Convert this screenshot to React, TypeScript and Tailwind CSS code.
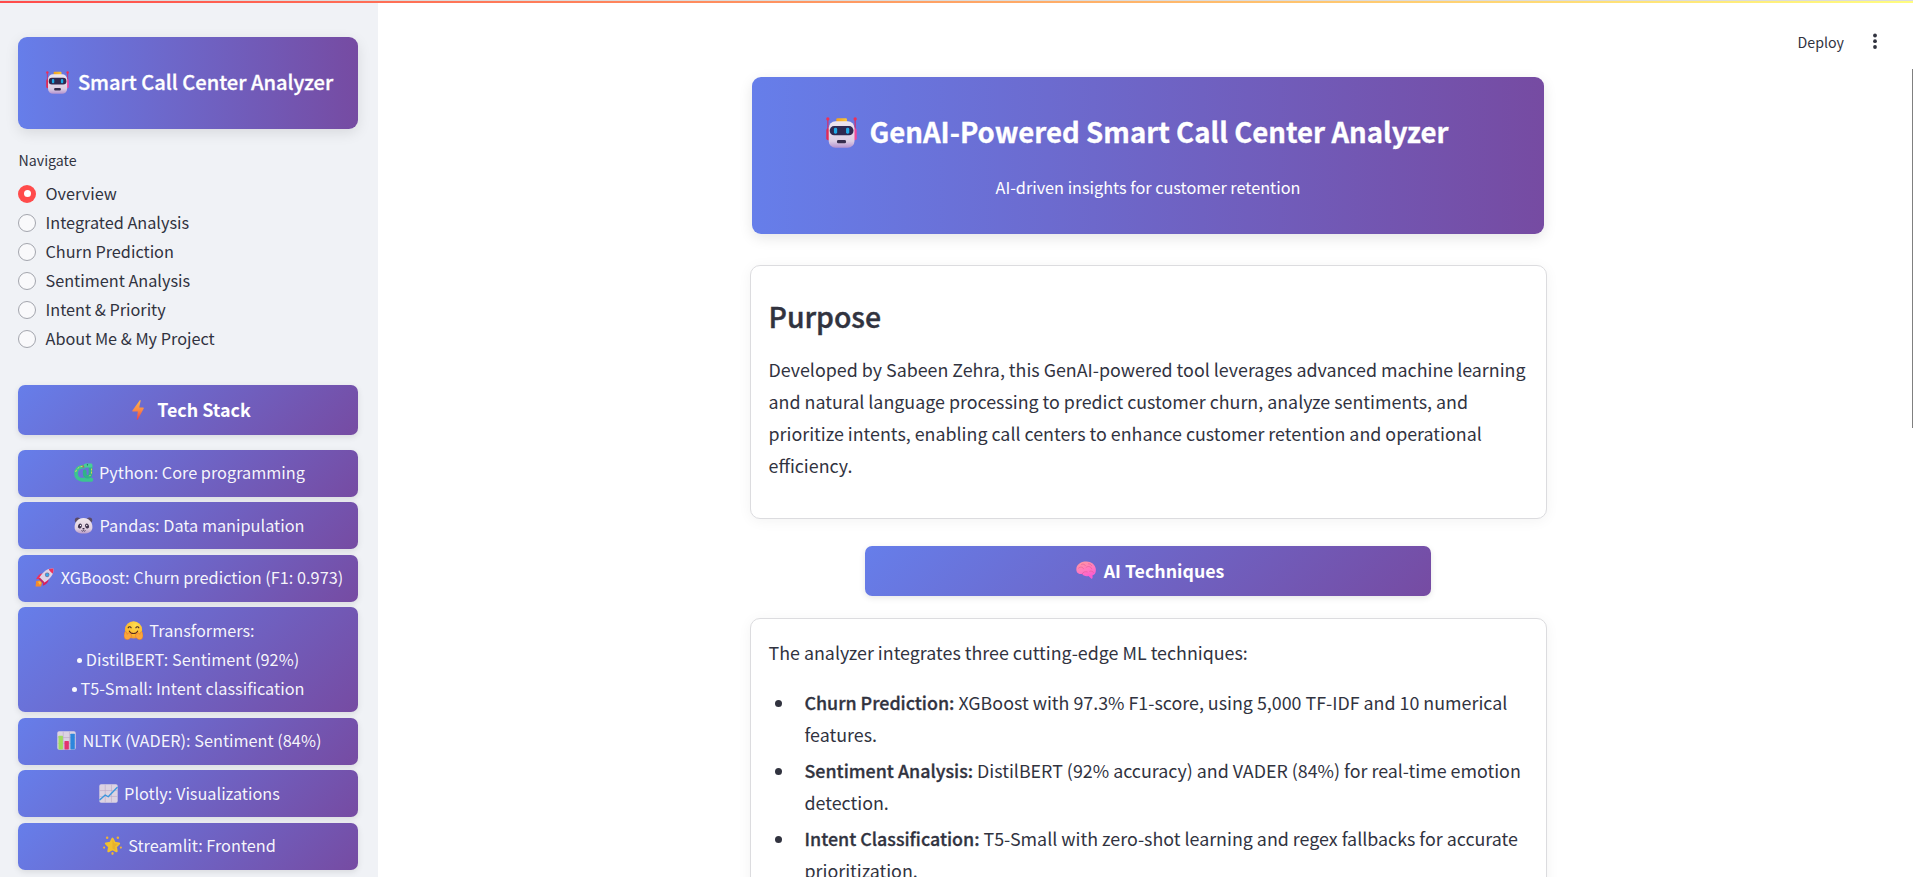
import React from "react";

const FONT = "font-['Noto_Sans_CJK_SC','Source_Sans_Pro',sans-serif]";

type IconProps = { className?: string };

function Robot({ className = "" }: IconProps) {
  return (
    <svg viewBox="0 0 32 32" className={className}>
      <defs>
        <linearGradient id="robotHead" x1="0" y1="0" x2="0" y2="1">
          <stop offset="0" stopColor="#eee6f0" />
          <stop offset="0.75" stopColor="#dccde4" />
          <stop offset="1" stopColor="#b391cf" />
        </linearGradient>
        <linearGradient id="robotTop" x1="0" y1="0" x2="1" y2="0">
          <stop offset="0" stopColor="#f0a024" />
          <stop offset="1" stopColor="#fbc83a" />
        </linearGradient>
      </defs>
      <path d="M1.9 2v14M30.1 2v14" stroke="#d42a6c" strokeWidth="1.2" />
      <circle cx="1.9" cy="2" r="1.7" fill="#ef2f56" />
      <circle cx="30.1" cy="2" r="1.7" fill="#ef2f56" />
      <rect x="0.3" y="11.5" width="5" height="12.5" rx="2" fill="#e02a55" />
      <rect x="26.7" y="11.5" width="5" height="12.5" rx="2" fill="#f0469a" />
      <rect x="10.6" y="1.2" width="11" height="6" rx="1.2" fill="url(#robotTop)" />
      <rect x="2.8" y="4.4" width="26.6" height="27.4" rx="7" fill="url(#robotHead)" />
      <rect x="3.8" y="9.4" width="24.6" height="9.4" rx="4.5" fill="#2f2850" />
      <rect x="8.2" y="11.2" width="3.3" height="6" rx="1.4" fill="#1fa9e6" />
      <rect x="20.7" y="11.2" width="3.3" height="6" rx="1.4" fill="#1fa9e6" />
      <rect x="11.3" y="23.7" width="9.4" height="3.5" rx="1.5" fill="#352d4d" />
    </svg>
  );
}

function Bolt({ className = "" }: IconProps) {
  return (
    <svg viewBox="0 0 32 32" className={className}>
      <defs>
        <linearGradient id="bolt" x1="0" y1="0" x2="0" y2="1">
          <stop offset="0" stopColor="#fdb54a" />
          <stop offset="0.5" stopColor="#fb8b45" />
          <stop offset="1" stopColor="#ee3f4c" />
        </linearGradient>
      </defs>
      <path
        d="M18.600 0.600c.9-.9 1.900-.3 1.600.9L17.900 12h6.200c1.100 0 1.500 1 .9 1.900L15.600 31c-.7 1-1.700.6-1.500-.6L15.700 18.500H8c-1.100 0-1.600-.8-.9-1.800z"
        fill="url(#bolt)"
      />
    </svg>
  );
}

function Snake({ className = "" }: IconProps) {
  return (
    <svg viewBox="0 0 32 32" className={className}>
      <path d="M17 6C8 6 3.400 11 3.400 17.500c0 7 5 10.700 11 10.700h15" fill="none" stroke="#3cc491" strokeWidth="6.400" strokeLinecap="round" />
      <path d="M27.800 5v12.500c0 7.500-9.800 7.500-9.800.5v-4" fill="none" stroke="#30b288" strokeWidth="6.200" strokeLinecap="round" />
      <path d="M16.500 4c0-2.300 2-3.200 5-3.200h7c2 0 2.500 1 2.500 3v3.700H21c-3 0-4.500-1-4.500-3.500z" fill="#47cf98" />
      <path d="M17 6l-3-1.800M17 6l-2.500 1.500" stroke="#e6315c" strokeWidth="1.400" />
      <path d="M3 14.500l1-2.400M6.500 9l2-1.600M11.500 6.200l2.200-.5M29.600 10v2M29.400 15v2.200M27.400 20.500l-1 1.200" stroke="#e6d94e" strokeWidth="1.600" strokeLinecap="round" />
      <circle cx="22.600" cy="3" r="1.100" fill="#1f4a47" />
    </svg>
  );
}

function Panda({ className = "" }: IconProps) {
  return (
    <svg viewBox="0 0 32 32" className={className}>
      <defs>
        <linearGradient id="panda" x1="0" y1="0" x2="0" y2="1">
          <stop offset="0" stopColor="#efe6ec" />
          <stop offset="0.7" stopColor="#e0cfe0" />
          <stop offset="1" stopColor="#b99bc9" />
        </linearGradient>
      </defs>
      <circle cx="6" cy="7" r="4.6" fill="#5a4a66" />
      <circle cx="26" cy="7" r="4.6" fill="#5a4a66" />
      <path d="M16 3.500c9 0 15 7 15 15 0 8-6 11-15 11S1 26.500 1 18.500c0-8 6-15 15-15z" fill="url(#panda)" />
      <ellipse cx="10" cy="17" rx="3.2" ry="4.2" transform="rotate(25 10 17)" fill="#3f324d" />
      <ellipse cx="22" cy="17" rx="3.2" ry="4.2" transform="rotate(-25 22 17)" fill="#3f324d" />
      <circle cx="11" cy="16" r="1.1" fill="#fff" />
      <circle cx="21.5" cy="16" r="1.1" fill="#fff" />
      <ellipse cx="16" cy="21.5" rx="2" ry="1.4" fill="#2f2440" />
      <path d="M12.500 24.500c1.500 1.500 2.800 1.300 3.500 0 .7 1.300 2 1.500 3.500 0" fill="none" stroke="#2f2440" strokeWidth="1.3" />
    </svg>
  );
}

function Rocket({ className = "" }: IconProps) {
  return (
    <svg viewBox="0 0 32 32" className={className}>
      <path d="M2 22l6-1 4 4-2 6H1z" fill="#f58a2c" />
      <path d="M5 23l4-.5 1.500 3L8 28z" fill="#fbbf3c" />
      <path d="M14 9C8 9 4 14 2 19l8-1z" fill="#ef2f5c" />
      <path d="M23 18c0 6-4.500 10-10 12l1-8z" fill="#d91f5f" />
      <path d="M31 1c1 9-4 17-16 24l-8-8C14 5 22 0 31 1z" fill="#dfd3e6" />
      <path d="M31 1c.3 3 0 5.500-1 8.500C27.500 8 24.500 5 23 2.300 25.500 1.200 28 .7 31 1z" fill="#f0305a" />
      <circle cx="20.5" cy="11.5" r="3.9" fill="#7f7396" />
      <circle cx="20.5" cy="11.5" r="2.7" fill="#35a9ee" />
      <path d="M8 16l8 8-2.500 1.800L6 18.500z" fill="#c42a62" />
    </svg>
  );
}

function Hug({ className = "" }: IconProps) {
  return (
    <svg viewBox="0 0 32 32" className={className}>
      <defs>
        <radialGradient id="hug" cx="0.6" cy="0.25" r="0.8">
          <stop offset="0" stopColor="#ffe04f" />
          <stop offset="0.7" stopColor="#fbb62d" />
          <stop offset="1" stopColor="#ee8b3a" />
        </radialGradient>
      </defs>
      <circle cx="16" cy="15" r="14.5" fill="url(#hug)" />
      <path d="M7 11.500c1-2.500 4-2.500 5 0M20 11.500c1-2.500 4-2.500 5 0" fill="none" stroke="#4a2b2b" strokeWidth="1.9" strokeLinecap="round" />
      <path d="M9 17c2 5.500 12 5.500 14 0" fill="none" stroke="#5a2a20" strokeWidth="1.9" strokeLinecap="round" />
      <path d="M1 19c1.500-1.500 3-.5 3.500 1l1 2.500 2-2.500c1.500-1.500 3 0 2.500 1.500 2 0 3 1.500 2.500 3.500C12 29 9 31.500 5.500 31.500 1 31.500 0 27 0 24z" fill="#fba63a" stroke="#e2782b" strokeWidth=".8" />
      <path d="M31 19c-1.500-1.500-3-.5-3.500 1l-1 2.500-2-2.500c-1.500-1.500-3 0-2.500 1.500-2 0-3 1.500-2.500 3.500.5 4 3.500 6.500 7 6.500 4.500 0 5.500-4.500 5.500-7.500z" fill="#fba63a" stroke="#e2782b" strokeWidth=".8" />
    </svg>
  );
}

function ChartPaper() {
  return (
    <>
      <rect x="0.5" y="0.5" width="31" height="31" rx="3" fill="#dcd3e2" />
      <path d="M10.500 1v30M21 1v30M1 11h30M1 21h30" stroke="#bba9c7" strokeWidth="1" />
    </>
  );
}

function Bars({ className = "" }: IconProps) {
  return (
    <svg viewBox="0 0 32 32" className={className}>
      <ChartPaper />
      <rect x="2.5" y="8" width="7.5" height="23" rx="1" fill="#9fdb60" />
      <rect x="12.5" y="17" width="7.5" height="14" rx="1" fill="#e2336f" />
      <rect x="22.5" y="4.5" width="7.5" height="26.5" rx="1" fill="#2d86dc" />
    </svg>
  );
}

function Line({ className = "" }: IconProps) {
  return (
    <svg viewBox="0 0 32 32" className={className}>
      <ChartPaper />
      <path d="M1.500 26.500l9-8 5 3L30.500 6" fill="none" stroke="#3a97de" strokeWidth="2.3" strokeLinecap="round" strokeLinejoin="round" />
    </svg>
  );
}

function GlowStar({ className = "" }: IconProps) {
  return (
    <svg viewBox="0 0 32 32" className={className}>
      <path
        d="M16 4.500l3.500 7 7.600 1.100-5.500 5.400 1.300 7.600L16 22 9.100 25.600l1.300-7.600-5.500-5.400 7.600-1.100z"
        fill="#f0c02e"
        stroke="#f0c02e"
        strokeWidth="3.6"
        strokeLinejoin="round"
      />
      <path d="M16 6l2.600 6 6.400 1-4.600 4.600 1 6.400-5.400-3z" fill="#dba22c" opacity=".5" />
      <g fill="#f0b335">
        <circle cx="7" cy="3" r="2.1" />
        <circle cx="25" cy="3" r="2.1" />
        <circle cx="1.9" cy="19.5" r="1.8" />
        <circle cx="30.1" cy="19.5" r="1.8" />
        <ellipse cx="16" cy="29.4" rx="1.9" ry="2.4" />
      </g>
    </svg>
  );
}

function Brain({ className = "" }: IconProps) {
  return (
    <svg viewBox="0 0 32 32" className={className}>
      <defs>
        <linearGradient id="brain" x1="0" y1="0" x2="0.4" y2="1">
          <stop offset="0" stopColor="#ff9c9c" />
          <stop offset="0.6" stopColor="#ff78c0" />
          <stop offset="1" stopColor="#fa5bd0" />
        </linearGradient>
      </defs>
      <path
        d="M14 2.500c8-1.500 17 3.500 17.700 12 .6 6-1.700 9.500-5.200 10v3.500c0 2-1.500 2.500-2.700 1L20 25.500c-4 1-8.500 0-10-3-5 .5-9.500-2-9.500-7.500C.5 8 7 3 14 2.500z"
        fill="url(#brain)"
      />
      <path
        d="M9 7c3-1.500 5 0 6 2M4 13c3-3 7-2 8 1M16 12c3-3 8-2 9 2M20 6c2 0 4 1 5 3M10 22c1-3 5-4 8-3M22 18c2-1 5 0 6 2"
        fill="none"
        stroke="#dc4d90"
        strokeWidth="1"
        strokeLinecap="round"
        opacity=".75"
      />
    </svg>
  );
}

const navItems = [
  "Overview",
  "Integrated Analysis",
  "Churn Prediction",
  "Sentiment Analysis",
  "Intent & Priority",
  "About Me & My Project",
];

type StackItem = {
  icon: (p: IconProps) => React.ReactElement;
  title: string;
  points?: string[];
  box: string;
};

const stack: StackItem[] = [
  { icon: Snake, title: "Python: Core programming", box: "h-[47px] mt-[15px] pb-[3px]" },
  { icon: Panda, title: "Pandas: Data manipulation", box: "h-[47px] mt-[5px] pb-px" },
  { icon: Rocket, title: "XGBoost: Churn prediction (F1: 0.973)", box: "h-[47px] mt-[6px] pb-[3px]" },
  {
    icon: Hug,
    title: "Transformers:",
    points: ["DistilBERT: Sentiment (92%)", "T5-Small: Intent classification"],
    box: "h-[105px] mt-[5px] pb-px",
  },
  { icon: Bars, title: "NLTK (VADER): Sentiment (84%)", box: "h-[47px] mt-[6px] pb-[3px]" },
  { icon: Line, title: "Plotly: Visualizations", box: "h-[47px] mt-[5px] pb-px" },
  { icon: GlowStar, title: "Streamlit: Frontend", box: "h-[47px] mt-[6px] pb-[3px]" },
];

const techniques = [
  { name: "Churn Prediction:", first: "XGBoost with 97.3% F1-score, using 5,000 TF-IDF and 10 numerical", rest: "features." },
  { name: "Sentiment Analysis:", first: "DistilBERT (92% accuracy) and VADER (84%) for real-time emotion", rest: "detection." },
  { name: "Intent Classification:", first: "T5-Small with zero-shot learning and regex fallbacks for accurate", rest: "prioritization." },
];

function Sidebar() {
  return (
    <aside className="flex h-full w-[378px] shrink-0 flex-col bg-[#f0f2f6] pt-[37px] pr-[20px] pl-[18px]">
      <div className="flex h-[92px] shrink-0 items-center justify-center rounded-[9px] bg-linear-to-r/srgb from-[#667eea] to-[#764ba2] pb-[3px] text-white shadow-[0_4px_14px_rgba(0,0,0,0.1)]">
        <Robot className="mt-px mr-[9px] ml-[3px] h-[23px] w-[23px] shrink-0" />
        <h1 className="text-[20.1px] leading-8 font-medium [-webkit-text-stroke:0.3px_white]">Smart Call Center Analyzer</h1>
      </div>

      <div className="mt-[20px] ml-[0.5px] text-[14.2px] leading-[22px]">Navigate</div>
      <ul className="mt-[8px]">
        {navItems.map((label, i) => (
          <li key={label} className="flex h-[29px] items-center">
            {i === 0 ? (
              <span className="flex size-[18px] items-center justify-center rounded-full bg-[#ff4b4b]">
                <span className="size-[7px] rounded-full bg-white" />
              </span>
            ) : (
              <span className="size-[18px] rounded-full border border-[#a3a5ad] bg-[#f9f9fb]" />
            )}
            <span className="ml-[9.5px] text-[16.25px] leading-[27px]">{label}</span>
          </li>
        ))}
      </ul>

      <div className="mt-[32px] flex h-[50px] shrink-0 items-center justify-center rounded-[7px] bg-linear-135/srgb from-[#667eea] to-[#764ba2] pb-[2px] text-white shadow-[0_2px_6px_rgba(0,0,0,0.1)]">
        <Bolt className="mt-px mr-[9px] ml-[3px] h-[20px] w-[20px] shrink-0" />
        <h2 className="text-[17.9px] leading-8 font-bold">Tech Stack</h2>
      </div>

      {stack.map(({ icon: Icon, title, points = [], box }) => (
        <div
          key={title}
          className={`${box} flex shrink-0 flex-col items-center justify-center rounded-[7px] bg-linear-135/srgb from-[#667eea] to-[#764ba2] text-[16.3px] leading-[29px] whitespace-nowrap text-white/95 shadow-[0_2px_6px_rgba(0,0,0,0.1)]`}
        >
          <div className="flex items-center">
            <Icon className="mr-[6.5px] ml-[2.5px] h-[19px] w-[19px] shrink-0" />
            <span>{title}</span>
          </div>
          {points.map((p) => (
            <div key={p} className="flex items-center">
              <span className="mt-[3px] mr-[4px] size-[5px] rounded-full bg-white/95" />
              {p}
            </div>
          ))}
        </div>
      ))}
    </aside>
  );
}

const card = "w-[797px] rounded-[10px] border border-[#dcdcdf] bg-white px-[17.5px] shadow-[0_2px_14px_rgba(0,0,0,0.05)]";

function Main() {
  return (
    <main className="flex min-w-0 flex-1 flex-col">
      <header className="flex h-[77px] shrink-0 items-start justify-end pt-[30px] pr-[34px]">
        <span className="text-[14.2px] leading-[24px]">Deploy</span>
        <svg viewBox="0 0 8 18" className="mt-[2px] ml-[27px] h-[18px] w-[8px]" fill="#31333F">
          <circle cx="4" cy="3.5" r="1.9" />
          <circle cx="4" cy="9.2" r="1.9" />
          <circle cx="4" cy="15" r="1.9" />
        </svg>
      </header>

      <div className="ml-[372px] flex w-[797px] shrink-0 flex-col items-start">
        <section className="ml-[2px] flex h-[157px] w-[792px] flex-col items-center rounded-[9px] bg-linear-to-r/srgb from-[#667eea] to-[#764ba2] pt-[34px] text-white shadow-[0_4px_14px_rgba(0,0,0,0.1)]">
          <div className="flex h-[40px] items-center pr-[21px]">
            <Robot className="mt-[2px] mr-[12px] h-[31px] w-[31px] shrink-0" />
            <h1 className="text-[27.6px] leading-10 font-bold whitespace-nowrap [-webkit-text-stroke:0.3px_white]">
              GenAI-Powered Smart Call Center Analyzer
            </h1>
          </div>
          <p className="mt-[20px] text-[16.25px] leading-8">AI-driven insights for customer retention</p>
        </section>

        <section className={`${card} mt-[31px] h-[254px] pt-[30px]`}>
          <h2 className="text-[28.4px] leading-10 font-medium [-webkit-text-stroke:0.4px_#31333F]">Purpose</h2>
          <p className="mt-[17px] text-[17.85px] leading-8 whitespace-nowrap">
            Developed by Sabeen Zehra, this GenAI-powered tool leverages advanced machine learning
            <br />
            and natural language processing to predict customer churn, analyze sentiments, and
            <br />
            prioritize intents, enabling call centers to enhance customer retention and operational
            <br />
            efficiency.
          </p>
        </section>

        <div className="mt-[27px] ml-[115px] flex h-[50px] w-[566px] items-center justify-center rounded-[7px] bg-linear-135/srgb from-[#667eea] to-[#764ba2] pb-[2px] text-white shadow-[0_2px_6px_rgba(0,0,0,0.1)]">
          <Brain className="mr-[8px] ml-[4px] h-[20px] w-[20px] shrink-0" />
          <h2 className="text-[17.8px] leading-8 font-bold">AI Techniques</h2>
        </div>

        <section className={`${card} mt-[22px] h-[300px] pt-[17px] text-[17.85px] leading-8`}>
          <p>The analyzer integrates three cutting-edge ML techniques:</p>
          <ul className="mt-[18px] flex flex-col gap-[4px]">
            {techniques.map((t) => (
              <li key={t.name} className="flex">
                <span className="mt-[14px] ml-[6.5px] size-[7px] shrink-0 rounded-full bg-[#31333F]" />
                <span className="ml-[22.5px] whitespace-nowrap">
                  <strong className="font-medium [-webkit-text-stroke:0.3px_#31333F]">{t.name}</strong> {t.first}
                  <br />
                  {t.rest}
                </span>
              </li>
            ))}
          </ul>
        </section>
      </div>
    </main>
  );
}

export default function App() {
  return (
    <div className={`${FONT} relative flex h-[877px] w-full overflow-hidden bg-white text-[#31333F]`}>
      <Sidebar />
      <Main />
      <div className="absolute inset-x-0 top-0 h-[3px] border-t border-[#dcdcdc] bg-linear-to-r/srgb from-[#ff4b4b] to-[#fffd80]" />
      <div className="absolute top-[69px] right-0 h-[359px] w-px bg-[#808080]" />
    </div>
  );
}
